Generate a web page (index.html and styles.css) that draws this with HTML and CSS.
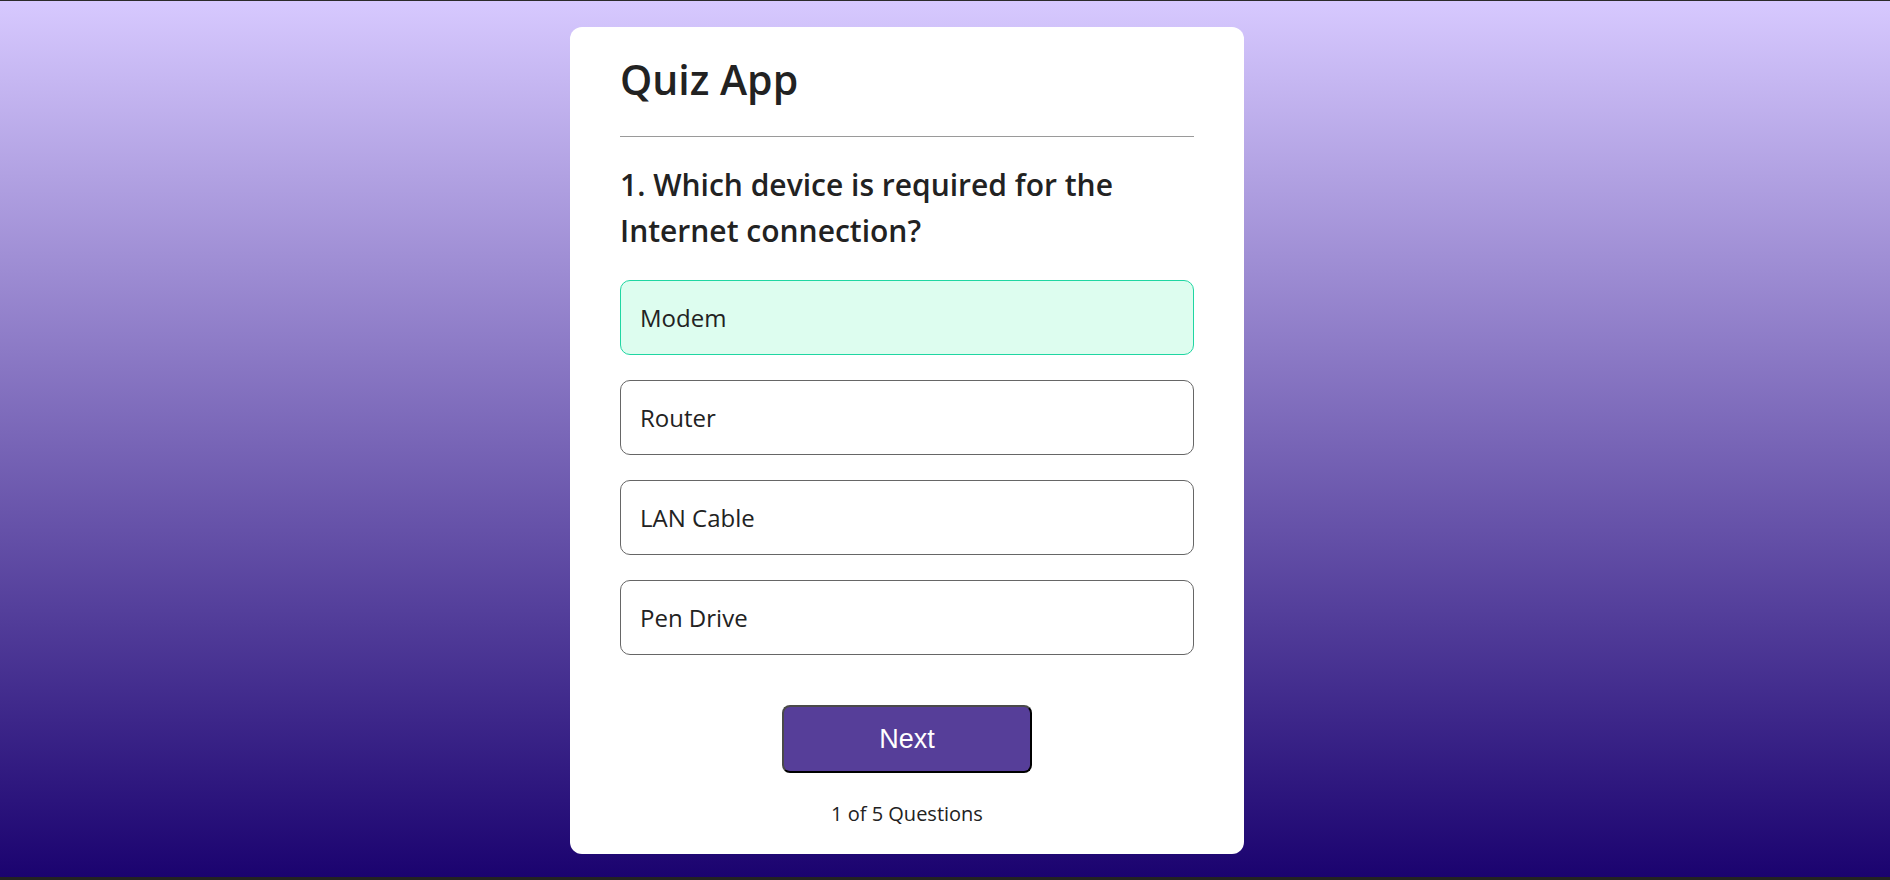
FILE: index.html
```html
<!DOCTYPE html>
<html lang="en">
<head>
<meta charset="utf-8">
<title>Quiz App</title>
<link rel="stylesheet" href="styles.css">
</head>
<body>
<main class="app">
  <h1 class="title">Quiz App</h1>
  <hr class="rule">
  <h2 class="question">1. Which device is required for the Internet connection?</h2>
  <ul class="options">
    <li class="option correct">Modem</li>
    <li class="option">Router</li>
    <li class="option">LAN Cable</li>
    <li class="option">Pen Drive</li>
  </ul>
  <div class="actions">
    <button class="next" type="button">Next</button>
  </div>
  <p class="index">1 of 5 Questions</p>
</main>
</body>
</html>
```
FILE: styles.css
```css
* { box-sizing: border-box; }
html, body { margin: 0; padding: 0; }
body {
  height: 880px;
  overflow: hidden;
  background: linear-gradient(#d7c9ff, #1a026f);
  border-top: 1px solid #2b2b2b;
  border-bottom: 3px solid #232323;
  font-family: "Open Sans", "Liberation Sans", sans-serif;
  color: #222;
}
.app {
  width: 674px;
  margin: 26px 0 0 570px;
  background: #fff;
  border-radius: 12px;
  padding: 21px 50px 25px;
}
.title {
  margin: 0;
  font-size: 41px;
  line-height: 63px;
  font-weight: 600;
  color: #222;
}
.rule {
  margin: 25px 0 0;
  border: 0;
  height: 1px;
  background: #9a9a9a;
}
.question {
  margin: 25px 0 0;
  font-size: 30px;
  line-height: 45.5px;
  font-weight: 600;
  color: #222;
}
.options {
  list-style: none;
  margin: 27px 0 0;
  padding: 0;
  display: flex;
  flex-direction: column;
  gap: 25px;
}
.option {
  height: 75px;
  display: flex;
  align-items: center;
  padding-left: 19px;
  border: 1px solid #666;
  border-radius: 10px;
  font-size: 24px;
  color: #222;
}
.option.correct {
  background: #ddfdef;
  border-color: #1fd6a2;
}
.actions {
  display: flex;
  justify-content: center;
  margin-top: 50px;
}
.next {
  width: 250px;
  height: 68px;
  background: #563e99;
  color: #fff;
  font-family: "Liberation Sans", Arial, sans-serif;
  font-size: 27px;
  border: 2px solid;
  border-color: #4a4a4a #000 #000 #4a4a4a;
  border-radius: 8px;
}
.index {
  margin: 26px 0 0;
  text-align: center;
  font-size: 20px;
  line-height: 30px;
  color: #222;
}
```
